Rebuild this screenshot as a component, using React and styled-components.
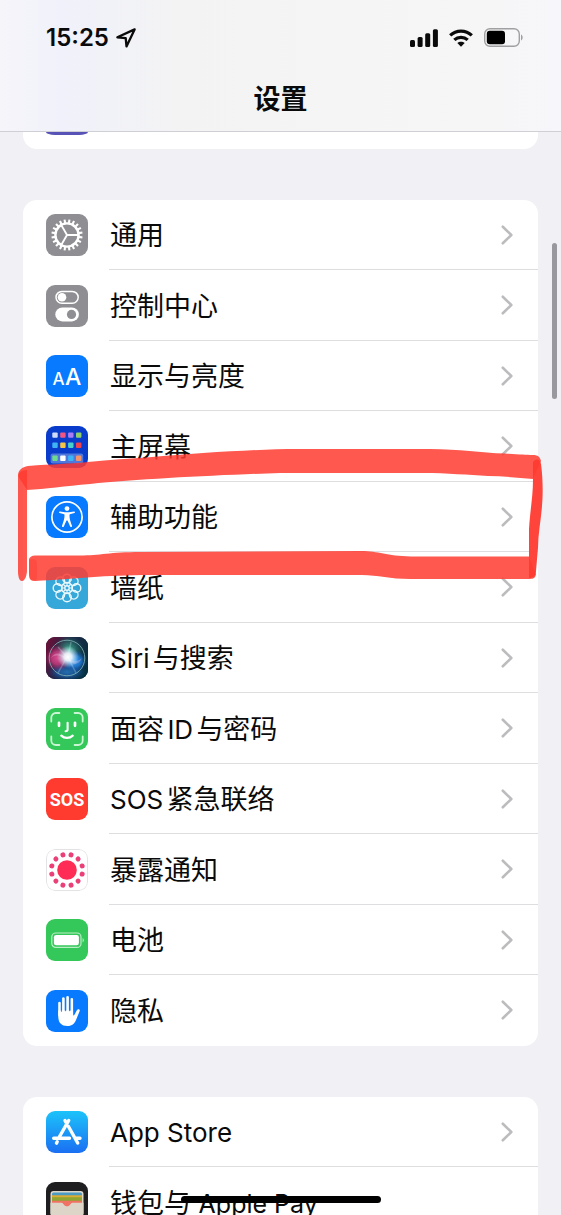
import React from 'react'
import styled, { createGlobalStyle } from 'styled-components'

const GlobalStyle = createGlobalStyle`
  * {
    box-sizing: border-box;
  }

  body {
    margin: 0;
    background: #f0f0f5;
    color: #0a0a0a;
    font-family: Inter, "Noto Sans CJK SC", sans-serif;
  }
`

/*page*/
const Page = styled.div`
  position: relative;
  height: 100vh;
  overflow: hidden;
  background: #f0f0f5;
`

/*header*/
const Header = styled.header`
  background: linear-gradient(90deg, #f5f5fa 0%, #f3f3fa 6%, #f0f1fa 11%, #f1f2f8 18%, #f3f3f4 32%, #f5f5f5 60%, #f6f6f7 88%, #f7f7fb 100%);
  border-bottom: 1px solid #cfcfd6;
`

const StatusBar = styled.div`
  display: flex;
  align-items: center;
  justify-content: space-between;
  height: 75px;
  padding: 0 38px 0 46px;
`

const StatusSide = styled.div`
  display: flex;
  align-items: center;
  gap: ${props => props.$gap}px;
`

const Clock = styled.time`
  font-size: 24px;
  line-height: 30px;
  font-weight: 600;
`

const Title = styled.h1`
  margin: 0;
  padding-bottom: 6px;
  font-size: 27px;
  line-height: 50px;
  font-weight: 700;
  text-align: center;
`

/*groups*/
const Main = styled.main`
  display: flex;
  flex-direction: column;
  gap: 51px;
  padding: 0 23px;
`

const Group = styled.ul`
  list-style: none;
  margin: 0;
  padding: 0;
  background: #fff;
  border-radius: 14px;
`

const GroupEnd = styled.div`
  height: 17px;
  padding-left: 23px;
  background: #fff;
  border-radius: 0 0 14px 14px;
`

const IconEnd = styled.div`
  width: 42px;
  height: 3px;
  background: #5752b5;
  border-radius: 0 0 9px 9px / 0 0 3px 3px;
`

/*rows*/
const Row = styled.li`
  height: 70px;

  &:nth-child(even) {
    height: 71px;
  }
`

const RowLink = styled.a`
  display: flex;
  align-items: center;
  gap: 21px;
  height: 100%;
  padding-left: 23px;
  color: inherit;
  text-decoration: none;
`

const RowBody = styled.span`
  flex: 1;
  display: flex;
  align-items: center;
  justify-content: space-between;
  height: 100%;
  padding: 0 25px 0 1px;
  border-bottom: 1px solid #dedee1;

  ${Row}:last-child & {
    border-bottom-color: transparent;
  }
`

const Label = styled.span`
  padding-top: 3px;
  font-size: 27px;
  line-height: 40px;
  white-space: nowrap;
  text-autospace: normal;
`

const Latin = styled.span`
  font-size: ${props => props.$small ? 25 : 26}px;
`

const Tile = styled.svg`
  flex: none;
  width: 42px;
  height: 42px;
  border-radius: 9px;
  background: ${props => props.$bg};
`

/*things that float over the list*/
const ScrollThumb = styled.div`
  position: absolute;
  top: 243px;
  right: 4px;
  width: 5px;
  height: 156px;
  border-radius: 3px;
  background: #98989e;
`

const HomeIndicator = styled.div`
  position: absolute;
  bottom: 12px;
  left: 50%;
  width: 200px;
  height: 7px;
  margin-left: -100px;
  border-radius: 4px;
  background: #000;
`

const Marker = styled.svg`
  position: absolute;
  top: 440px;
  left: 0;
  width: 100%;
  height: 150px;
  pointer-events: none;
`

/*icons*/
const range = n => Array.from({ length: n }, (_, i) => i)

const GearIcon = () => (
  <Tile $bg="#8e8e93" viewBox="0 0 42 42" fill="none" stroke="#fff">
    <circle cx="21" cy="21" r="11.6" strokeWidth="2.4" />
    {range(20).map(i => (
      <path key={i} d="M33 21h3.600" strokeWidth="2.100" transform={`rotate(${i * 18 + 9} 21 21)`} />
    ))}
    {range(3).map(i => (
      <path key={i} d="M21 21h12" strokeWidth="1.900" transform={`rotate(${i * 120} 21 21)`} />
    ))}
  </Tile>
)

const SwitchesIcon = () => (
  <Tile $bg="#8e8e93" viewBox="0 0 42 42">
    <rect x="10" y="6.4" width="22.2" height="11.8" rx="5.9" fill="none" stroke="#fff" strokeWidth="1.5" />
    <circle cx="16" cy="12.3" r="4.3" fill="#fff" />
    <rect x="9.3" y="22.4" width="23.6" height="14" rx="7" fill="#fff" />
    <circle cx="25.5" cy="29.4" r="4.6" fill="#8e8e93" />
  </Tile>
)

const TextSizeIcon = () => (
  <Tile $bg="#077aff" viewBox="0 0 42 42" fill="#fff" fontFamily="Inter, sans-serif" fontWeight="500">
    <text x="6.500" y="30" fontSize="17">A</text>
    <text x="19" y="30" fontSize="23">A</text>
  </Tile>
)

const apps = [
  ['#cfdcf8', '#ef5682', '#a97bf5', '#8fcf6b'],
  ['#3fb4f4', '#f5c545', '#49d0c9', '#ee4350'],
  ['#6fdc8c', '#ffffff', '#3bb5f6', '#f49468'],
]

const HomeScreenIcon = () => (
  <Tile $bg="#0a3ccb" viewBox="0 0 42 42">
    <rect x="4.6" y="27.4" width="32.6" height="10" rx="2" fill="#4f78dc" />
    {apps.map((line, y) => line.map((color, x) => (
      <rect key={`${x}${y}`} x={6.3 + x * 7.9} y={[6.4, 16.6, 29.5][y]} width="5.4" height="5.4" rx="1" fill={color} />
    )))}
  </Tile>
)

const AccessibilityIcon = () => (
  <Tile $bg="#077aff" viewBox="0 0 42 42">
    <circle cx="21" cy="21" r="15.1" fill="none" stroke="#fff" strokeWidth="1.7" />
    <circle cx="21" cy="12.6" r="2.4" fill="#fff" />
    <path fill="#fff" d="M13.9 15.500 19 16.200h4l5.100-.7c1-.1 1.200 1.400.3 1.600l-4.500 1.100c-.3.1-.4.4-.4.8 0 3.600.6 5.400 2.500 10.800.4 1.200-1.300 1.800-1.800.7L21.500 24.500h-1l-2.700 6c-.5 1.100-2.200.5-1.800-.7 1.900-5.400 2.500-7.200 2.500-10.800 0-.4-.1-.7-.4-.8l-4.500-1.100c-.9-.2-.7-1.700.3-1.600z" />
  </Tile>
)

const FlowerIcon = () => (
  <Tile $bg="#36a7d9" viewBox="0 0 42 42" fill="none" stroke="#e9f8fd" strokeWidth="1.400">
    {range(8).map(i => (
      <circle key={i} cx="30.500" cy="21" r="4.300" transform={`rotate(${i * 45} 21 21)`} />
    ))}
    {range(8).map(i => (
      <path key={i} d="M26.200 21h-3" strokeWidth="1.100" transform={`rotate(${i * 45} 21 21)`} />
    ))}
    <circle cx="21" cy="21" r="5" strokeWidth="0.900" />
    <circle cx="21" cy="21" r="2.200" />
  </Tile>
)

const SiriIcon = () => (
  <Tile $bg="#101a33" viewBox="0 0 42 42">
    <defs>
      <linearGradient id="siriBack" x1="0" y1="0.2" x2="1" y2="0.6">
        <stop offset="0" stopColor="#6b1038" />
        <stop offset="0.45" stopColor="#1f2748" />
        <stop offset="1" stopColor="#06303f" />
      </linearGradient>
      <radialGradient id="siriPink">
        <stop offset="0" stopColor="#f0559c" />
        <stop offset="0.5" stopColor="#dd3f88" stopOpacity="0.8" />
        <stop offset="1" stopColor="#c02368" stopOpacity="0" />
      </radialGradient>
      <radialGradient id="siriBlue">
        <stop offset="0" stopColor="#2f9cf5" />
        <stop offset="0.5" stopColor="#2380e0" stopOpacity="0.8" />
        <stop offset="1" stopColor="#1553b0" stopOpacity="0" />
      </radialGradient>
      <radialGradient id="siriGreen">
        <stop offset="0" stopColor="#4fc9a4" />
        <stop offset="1" stopColor="#178064" stopOpacity="0" />
      </radialGradient>
      <radialGradient id="siriGlow">
        <stop offset="0" stopColor="#fff" />
        <stop offset="0.35" stopColor="#f3fbff" stopOpacity="0.9" />
        <stop offset="1" stopColor="#bfe9ff" stopOpacity="0" />
      </radialGradient>
    </defs>
    <rect width="42" height="42" fill="url(#siriBack)" />
    <ellipse cx="21" cy="35" rx="19" ry="9" fill="url(#siriBlue)" opacity="0.600" />
    <circle cx="23" cy="13" r="15" fill="url(#siriGreen)" opacity="0.900" />
    <ellipse cx="12" cy="21" rx="13" ry="13" fill="url(#siriPink)" opacity="0.900" />
    <ellipse cx="29" cy="24" rx="12" ry="11" fill="url(#siriBlue)" />
    <path d="M5 21c5-8 10-4 16 0s11 4 15 0c-4 8-9 7-15 2S9 17 5 21z" fill="#f0c4e0" opacity="0.350" />
    <path d="M21 20 12 36M22 20l8 16M22 20l3-15M21 20l-9-10" stroke="#d8f2ff" strokeWidth="1.500" opacity="0.250" />
    <circle cx="22" cy="20" r="11" fill="url(#siriGlow)" />
    <circle cx="21" cy="21" r="17.800" fill="none" stroke="#7fb0b4" strokeWidth="1" opacity="0.850" />
  </Tile>
)

const FaceIcon = () => (
  <Tile $bg="#34c759" viewBox="0 0 42 42" fill="none" stroke="#fff" strokeLinecap="round">
    <path strokeWidth="1.800" stroke="#c9f5d3" d="M5.300 13.500V9.500a4.500 4.500 0 0 1 4.500-4.500h3.600M28.600 5h3.600a4.500 4.500 0 0 1 4.500 4.500v4M36.700 28.500v4a4.500 4.500 0 0 1-4.500 4.500h-3.600M13.400 37H9.800a4.500 4.500 0 0 1-4.500-4.500v-4" />
    <path strokeWidth="2.700" d="M13 14.800v3M29 14.800v3" />
    <path strokeWidth="2.100" d="M21.600 14.800v6.700c0 1.200-.7 1.700-2 1.700" />
    <path strokeWidth="2.300" d="M15.300 27.700c3.100 3 8.300 3 11.400 0" />
  </Tile>
)

const SosIcon = () => (
  <Tile $bg="#ff3b30" viewBox="0 0 42 42">
    <text x="21" y="28" textAnchor="middle" fill="#fff" fontFamily="Roboto, sans-serif" fontSize="18" fontWeight="700">SOS</text>
  </Tile>
)

const ExposureIcon = () => (
  <Tile $bg="#fff" viewBox="0 0 42 42">
    <rect x="0.500" y="0.500" width="41" height="41" rx="8.500" fill="none" stroke="#e3e3e6" />
    <circle cx="21" cy="21" r="9.800" fill="#ff2d55" />
    {range(12).map(i => (
      <circle key={i} cx="36.700" cy="21" r="2.500" fill="#ea3f77" transform={`rotate(${i * 30 + 15} 21 21)`} />
    ))}
  </Tile>
)

const BatteryIcon = () => (
  <Tile $bg="#34c759" viewBox="0 0 42 42">
    <rect x="5.800" y="14" width="29.200" height="14.400" rx="4" fill="none" stroke="#b9eec6" strokeWidth="1.200" />
    <rect x="7.900" y="16.100" width="25" height="10.200" rx="2.200" fill="#fff" />
    <path d="M36.600 19c1.700.7 1.700 3.700 0 4.400z" fill="#b9eec6" />
  </Tile>
)

const HandIcon = () => (
  <Tile $bg="#077aff" viewBox="0 0 42 42" fill="none" stroke="#fff" strokeLinecap="round">
    <path strokeWidth="2.600" d="M13.500 13v12M17.400 8.600V24M21.600 7.200V24M25.800 9.300V25" />
    <path fill="#fff" stroke="none" d="M12.200 20.500h14.900v4.200c0 .8.800 1 1.200.3l2.700-4.900c.8-1.400 3.300-.8 2.700.9l-3.800 9.200C28 34.500 25.300 36 21.300 36c-6 0-9.100-3.300-9.100-10.200z" />
    <path strokeWidth="0.800" strokeLinecap="butt" stroke="#077aff" d="M15.450 11v10.800M19.500 9v12.200M23.700 9v12.200" />
  </Tile>
)

const AppStoreIcon = () => (
  <Tile $bg="linear-gradient(#1cc3fa, #1b6ff2)" viewBox="0 0 42 42" fill="none" stroke="#fff" strokeWidth="3.400" strokeLinecap="round">
    <path d="M22.700 9.500 13.300 26M19 9.500l1.100 2M22.500 15.500 31.700 32M7.700 27.300h15.800M29.500 27.300h4.500" />
    <path d="M11.200 30.800l-.7 1.300" />
  </Tile>
)

const WalletIcon = () => (
  <Tile $bg="#1e1e20" viewBox="0 0 42 42">
    <rect x="4.500" y="9" width="33" height="25" rx="3" fill="#ddd6c8" />
    <rect x="6" y="10.500" width="30" height="7" rx="1.500" fill="#4b9ac4" />
    <path d="M6 13.200h30v3H6z" fill="#d9ac35" />
    <path d="M6 15.200h30v5H6z" fill="#8fa632" />
    <path d="M6 18.800h30v6H6z" fill="#ef7264" />
    <path d="M4.500 20.700h11.200c1.700 0 2.200 3.700 5.300 3.700s3.600-3.700 5.300-3.700h11.200V31a3 3 0 0 1-3 3h-27a3 3 0 0 1-3-3z" fill="#ddd6c8" />
  </Tile>
)

const Chevron = () => (
  <svg width="12" height="20" viewBox="0 0 12 20" fill="none" stroke="#bcbcbf" strokeWidth="2.600" strokeLinecap="round" strokeLinejoin="round">
    <path d="M1.800 1.700 10.300 10l-8.500 8.300" />
  </svg>
)

const LocationIcon = () => (
  <svg width="20" height="20" viewBox="0 0 20 20" fill="none" stroke="#0a0a0a" strokeWidth="2.300" strokeLinejoin="round">
    <path d="M18.600 1.400 1.400 9.300l8.300.9.800 8.200z" />
  </svg>
)

const SignalIcon = () => (
  <svg width="28" height="18" viewBox="0 0 28 18" fill="#0a0a0a">
    <rect x="0" y="11" width="5" height="7" rx="1.500" />
    <rect x="7.600" y="8" width="5" height="10" rx="1.500" />
    <rect x="15.200" y="4.200" width="5" height="13.800" rx="1.500" />
    <rect x="22.900" y="0.200" width="5" height="17.800" rx="1.500" />
  </svg>
)

const WifiIcon = () => (
  <svg width="24" height="18" viewBox="0 0 24 18" fill="none" stroke="#0a0a0a" strokeWidth="3.200">
    <path d="M1.200 6.400c6-5.800 15.600-5.800 21.600 0" />
    <path d="M5.300 10.900c3.800-3.500 9.600-3.500 13.400 0" />
    <path d="M12 17.800 8.300 14.100c2-1.900 5.400-1.900 7.400 0z" fill="#0a0a0a" stroke="none" />
  </svg>
)

const PowerIcon = () => (
  <svg width="39" height="19" viewBox="0 0 39 19">
    <rect x="0.700" y="0.700" width="34.600" height="17.600" rx="5.200" fill="none" stroke="#a0a0a3" strokeWidth="1.400" />
    <rect x="2.800" y="2.800" width="18.200" height="13.400" rx="3" fill="#000" />
    <path d="M37 6.500c2.200.8 2.200 5.200 0 6z" fill="#a0a0a3" />
  </svg>
)

const deviceRows = [
  { label: '通用', Icon: GearIcon },
  { label: '控制中心', Icon: SwitchesIcon },
  { label: '显示与亮度', Icon: TextSizeIcon },
  { label: '主屏幕', Icon: HomeScreenIcon },
  { label: '辅助功能', Icon: AccessibilityIcon },
  { label: '墙纸', Icon: FlowerIcon },
  { label: <><Latin>Siri</Latin>与搜索</>, Icon: SiriIcon },
  { label: <>面容<Latin>ID</Latin>与密码</>, Icon: FaceIcon },
  { label: <><Latin>SOS</Latin>紧急联络</>, Icon: SosIcon },
  { label: '暴露通知', Icon: ExposureIcon },
  { label: '电池', Icon: BatteryIcon },
  { label: '隐私', Icon: HandIcon },
]

const storeRows = [
  { label: <Latin>App Store</Latin>, Icon: AppStoreIcon },
  { label: <>钱包与 <Latin $small>Apple Pay</Latin></>, Icon: WalletIcon, noChevron: true },
]

const SettingsGroup = ({ rows }) => (
  <Group>
    {rows.map(({ label, Icon, noChevron }, i) => (
      <Row key={i}>
        <RowLink href="#">
          <Icon />
          <RowBody>
            <Label>{label}</Label>
            {!noChevron && <Chevron />}
          </RowBody>
        </RowLink>
      </Row>
    ))}
  </Group>
)

function App() {
  return (
    <Page>
      <GlobalStyle />
      <Header>
        <StatusBar>
          <StatusSide $gap={7}>
            <Clock>15:25</Clock>
            <LocationIcon />
          </StatusSide>
          <StatusSide $gap={11}>
            <SignalIcon />
            <WifiIcon />
            <PowerIcon />
          </StatusSide>
        </StatusBar>
        <Title>设置</Title>
      </Header>
      <Main>
        <GroupEnd>
          <IconEnd />
        </GroupEnd>
        <SettingsGroup rows={deviceRows} />
        <SettingsGroup rows={storeRows} />
      </Main>
      <Marker viewBox="0 0 561 150" preserveAspectRatio="none" fill="#ff3b30">
        <path opacity="0.850" d="M18 36c0-6 4-9 10-10 25-2 40-2 60-4 45-4 80-6 115-9 35-2 65-4 95-4h132c30 0 50 4 75 4.500 15 1 20 1 28 1.500 5 0 7 2 8 6l-8 18c-15-1-30-3-45-3-20-1-40-3-65-3H280c-60 2-140 6-190 11-25 2-45 5-63 6z" />
        <path opacity="0.850" d="M29 119c1-2 3-3.500 6-3.500h45c20 0 30-3.500 60-3.500l221-1c18 0 25 5 50 5.500h118l7 18c-1 4-3 4.500-8 4.500H410c-20 0-32-4-48-4H150c-45 0-75 4-115 6-5 0-6-3-6-8z" />
        <path opacity="0.850" d="M18 38c0-5 3-8 9-8v100c0 5-2 11-5 11s-4-5-4-10z" />
        <path opacity="0.400" d="M29 121c1-3 8-3 8 2v16c-4 3-8 2-8-4z" />
        <path opacity="0.950" d="M533 22c3-4 7-3 8 2 2 15 2 30 1 42-1 14-4 28-4 42l-2 23c0 5-3 7-7 7V89c1-18 4-32 4-50z" />
      </Marker>
      <ScrollThumb />
      <HomeIndicator />
    </Page>
  )
}

export default App
